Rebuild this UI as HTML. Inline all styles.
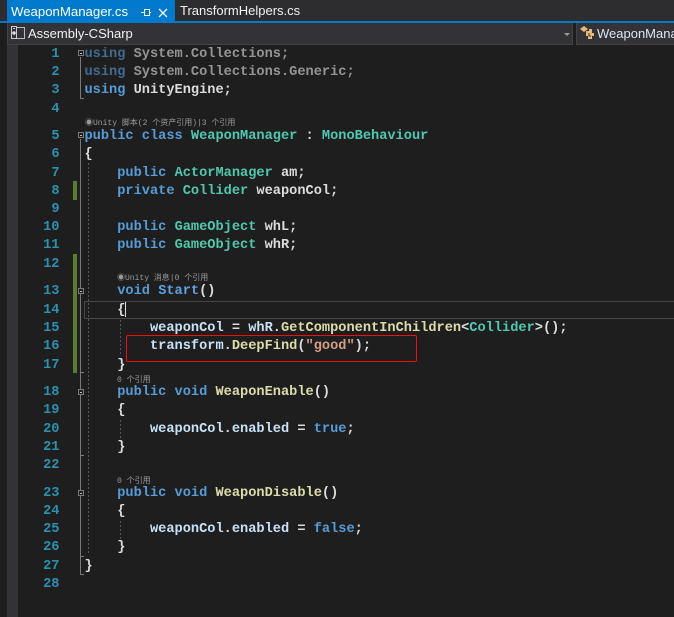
<!DOCTYPE html>
<html><head><meta charset="utf-8"><style>
html,body{margin:0;padding:0;background:#1e1e1e}
#p{position:relative;width:674px;height:617px;overflow:hidden;background:#1e1e1e}
#p div,#p svg{position:absolute}
.l,.n{font:bold 13.65px/18px "Liberation Mono","Noto Sans CJK SC",monospace;white-space:pre;color:#dcdcdc;margin-top:2px}
.l{left:84.5px}
.n{left:29.5px;width:30px;text-align:right;color:#2b91af}
.k{color:#569cd6}.t{color:#4ec9b0}.m{color:#dcdcaa}.s{color:#d69d85}.v{color:#c8e1f5}
.d{opacity:.62}
.h{font:8px/10px "Liberation Mono","Noto Sans CJK SC",monospace;color:#999;white-space:pre;margin-top:2px}
.ui{font:13px/18px "Liberation Sans","Noto Sans CJK SC",sans-serif;white-space:pre}
</style></head><body><div id="p">
<div style="left:0;top:0;width:674px;height:21px;background:#2d2d30"></div>
<div style="left:0;top:21px;width:674px;height:2px;background:#007acc"></div>
<div style="left:7px;top:0;width:168px;height:23px;background:#007acc"></div>
<div class="ui" style="left:11px;top:3px;color:#fff;font-size:13.2px">WeaponManager.cs</div>
<svg style="left:139px;top:5px" width="30" height="16"><path d="M2 7.500H5M5.500 4.500V10.500H10.500V4.500ZM10.500 7.500H12" stroke="#fff" fill="none"/><path d="M20 4L28 12M28 4L20 12" stroke="#fff" stroke-width="1.300"/></svg>
<div class="ui" style="left:180px;top:2px;color:#f1f1f1">TransformHelpers.cs</div>
<div style="left:7px;top:23px;width:566px;height:21px;background:#333337;border-bottom:1px solid #434346"></div>
<div style="left:7px;top:23px;width:1px;height:21px;background:#434346"></div>
<div style="left:572px;top:23px;width:1px;height:21px;background:#434346"></div>
<div style="left:576px;top:23px;width:98px;height:21px;background:#333337;border-bottom:1px solid #434346;border-left:1px solid #434346"></div>
<svg style="left:10px;top:25px" width="16" height="16"><path d="M6 2.500H14.500V13.500H6" fill="none" stroke="#bbb"/><rect x="1.500" y="1.500" width="5" height="12" fill="#333337" stroke="#ccc"/><circle cx="4" cy="8" r="1.800" fill="#ddd"/><path d="M3 3.500H5" stroke="#ccc"/></svg>
<div class="ui" style="left:28px;top:25px;color:#f1f1f1">Assembly-CSharp</div>
<svg style="left:564px;top:33px" width="6" height="3"><path d="M0 0H6L3 3Z" fill="#999"/></svg>
<svg style="left:580px;top:25px" width="16" height="16"><path d="M0 4L4 1L8 4L4 7ZM6 6H9V4H12V8H14V11H12V14H8V11H6Z" fill="#e8b878"/><path d="M9 8V11H11" stroke="#333" fill="none"/></svg>
<div class="ui" style="left:597px;top:25px;color:#dce4f2">WeaponManager</div>

<div style="left:7px;top:45px;width:11px;height:572px;background:#333337"></div>

<div style="left:73px;top:181px;width:4px;height:19px;background:#5b7a32"></div>
<div style="left:73px;top:254px;width:4px;height:119px;background:#5b7a32"></div>

<svg style="left:76px;top:45px" width="60" height="535" viewBox="0 45 60 535">
<g fill="none" stroke="#7a7a7a">
<path d="M4.500 57V98.500H8"/>
<path d="M4.500 139V574.500H8M4.500 372.500H8M4.500 455.500H8M4.500 556.500H8"/>
</g>
<g fill="#1e1e1e" stroke="#7a7a7a"><rect x="2.500" y="50.500" width="5" height="5"/><rect x="2.500" y="132.500" width="5" height="5"/><rect x="2.500" y="288.500" width="5" height="5"/><rect x="2.500" y="389.500" width="5" height="5"/><rect x="2.500" y="490.500" width="5" height="5"/></g>
<path d="M4 53.500H6M4 135.500H6M4 291.500H6M4 392.500H6M4 493.500H6" stroke="#bbb"/>
<path d="M12.500 163V555" stroke="#555" stroke-dasharray="2 2"/>
<path d="M44.500 320V354M44.500 420V438M44.500 521V539" stroke="#555" stroke-dasharray="2 2"/>
</svg>

<div style="left:84px;top:301px;width:590px;height:16px;border:1px solid #464646;border-right:0"></div>
<div style="left:125px;top:302px;width:1px;height:15px;background:#ddd"></div>
<div style="left:126px;top:335px;width:289px;height:25px;border:1px solid #f00f0f;border-radius:2px"></div>

<div class="n" style="top:44px">1</div><div class="l" style="top:44px"><span class="k d">using</span><span class="d"> System.Collections;</span></div>
<div class="n" style="top:62px">2</div><div class="l" style="top:62px"><span class="k d">using</span><span class="d"> System.Collections.Generic;</span></div>
<div class="n" style="top:80px">3</div><div class="l" style="top:80px"><span class="k">using</span> UnityEngine;</div>
<div class="n" style="top:99px">4</div>
<div class="h" style="left:85px;top:117px">◉Unity 脚本(2 个资产引用)|3 个引用</div>
<div class="n" style="top:126px">5</div><div class="l" style="top:126px"><span class="k">public class</span> <span class="t">WeaponManager</span> : <span class="t">MonoBehaviour</span></div>
<div class="n" style="top:144px">6</div><div class="l" style="top:144px">{</div>
<div class="n" style="top:163px">7</div><div class="l" style="top:163px">    <span class="k">public</span> <span class="t">ActorManager</span> am;</div>
<div class="n" style="top:181px">8</div><div class="l" style="top:181px">    <span class="k">private</span> <span class="t">Collider</span> weaponCol;</div>
<div class="n" style="top:199px">9</div>
<div class="n" style="top:217px">10</div><div class="l" style="top:217px">    <span class="k">public</span> <span class="t">GameObject</span> whL;</div>
<div class="n" style="top:235px">11</div><div class="l" style="top:235px">    <span class="k">public</span> <span class="t">GameObject</span> whR;</div>
<div class="n" style="top:254px">12</div>
<div class="h" style="left:117px;top:272px">◉Unity 消息|0 个引用</div>
<div class="n" style="top:281px">13</div><div class="l" style="top:281px">    <span class="k">void</span> <span style="color:#5ea3e0">Start</span>()</div>
<div class="n" style="top:300px">14</div><div class="l" style="top:300px">    {</div>
<div class="n" style="top:318px">15</div><div class="l" style="top:318px">        <span class="v">weaponCol</span> = <span class="v">whR</span>.<span class="m">GetComponentInChildren</span>&lt;<span class="t">Collider</span>&gt;();</div>
<div class="n" style="top:336px">16</div><div class="l" style="top:336px">        <span class="v">transform</span>.<span class="m">DeepFind</span>(<span class="s">"good"</span>);</div>
<div class="n" style="top:355px">17</div><div class="l" style="top:355px">    }</div>
<div class="h" style="left:117px;top:374px">0 个引用</div>
<div class="n" style="top:382px">18</div><div class="l" style="top:382px">    <span class="k">public void</span> <span class="m">WeaponEnable</span>()</div>
<div class="n" style="top:400px">19</div><div class="l" style="top:400px">    {</div>
<div class="n" style="top:419px">20</div><div class="l" style="top:419px">        <span class="v">weaponCol</span>.<span class="v">enabled</span> = <span class="k">true</span>;</div>
<div class="n" style="top:437px">21</div><div class="l" style="top:437px">    }</div>
<div class="n" style="top:455px">22</div>
<div class="h" style="left:117px;top:475px">0 个引用</div>
<div class="n" style="top:483px">23</div><div class="l" style="top:483px">    <span class="k">public void</span> <span class="m">WeaponDisable</span>()</div>
<div class="n" style="top:501px">24</div><div class="l" style="top:501px">    {</div>
<div class="n" style="top:519px">25</div><div class="l" style="top:519px">        <span class="v">weaponCol</span>.<span class="v">enabled</span> = <span class="k">false</span>;</div>
<div class="n" style="top:537px">26</div><div class="l" style="top:537px">    }</div>
<div class="n" style="top:556px">27</div><div class="l" style="top:556px">}</div>
<div class="n" style="top:574px">28</div>
</div></body></html>
